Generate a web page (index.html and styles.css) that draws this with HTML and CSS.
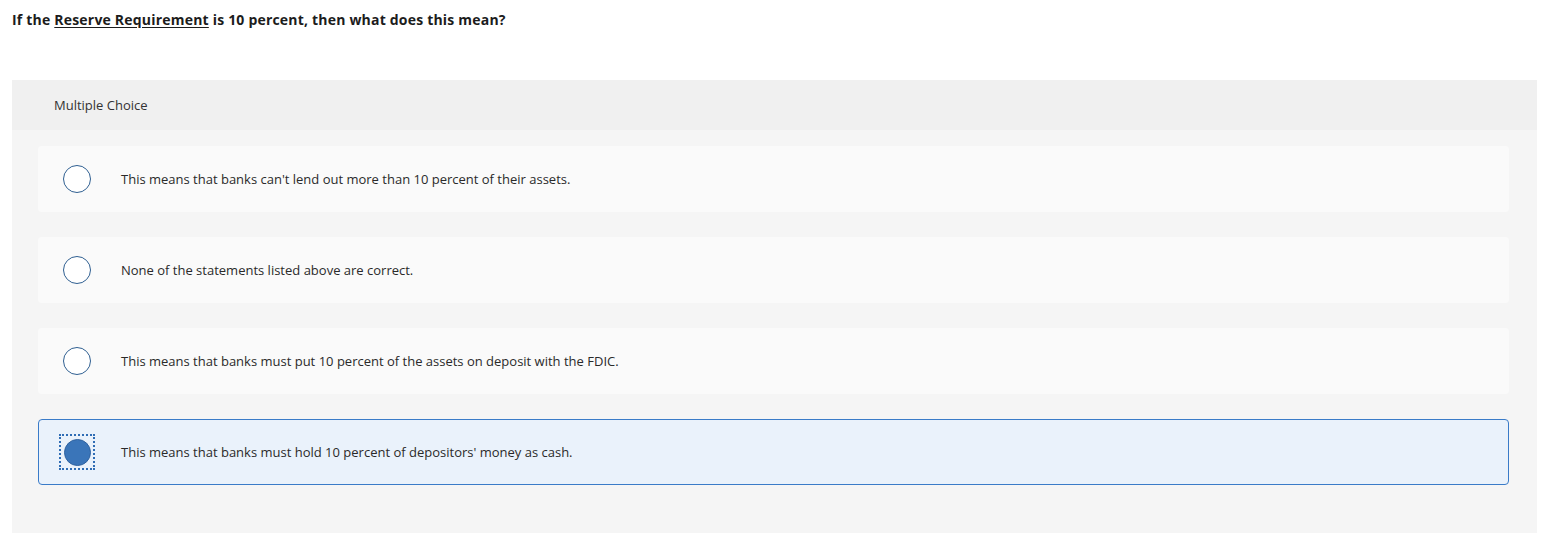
FILE: index.html
```html
<!DOCTYPE html>
<html>
<head>
<meta charset="utf-8">
<link rel="stylesheet" href="styles.css">
</head>
<body>
<div class="question">If the <a class="term" href="#">Reserve Requirement</a> is 10 percent, then what does this mean?</div>
<div class="panel">
  <div class="panel-head">Multiple Choice</div>
  <div class="options">
    <div class="option"><span class="radio"></span><span class="label">This means that banks can't lend out more than 10 percent of their assets.</span></div>
    <div class="option"><span class="radio"></span><span class="label">None of the statements listed above are correct.</span></div>
    <div class="option"><span class="radio"></span><span class="label">This means that banks must put 10 percent of the assets on deposit with the FDIC.</span></div>
    <div class="option selected"><span class="focus"><span class="radio"></span></span><span class="label">This means that banks must hold 10 percent of depositors' money as cash.</span></div>
  </div>
</div>
</body>
</html>
```
FILE: styles.css
```css
html, body { margin: 0; padding: 0; background: #fff; }
body {
  font-family: "Open Sans", "Liberation Sans", Arial, sans-serif;
  color: #222;
  height: 533px;
  overflow: hidden;
}
.question {
  padding: 10px 0 0 12px;
  height: 69px;
  box-sizing: border-box;
  font-size: 14px;
  font-weight: 700;
  letter-spacing: 0.2px;
  color: #1c1c1c;
}
.term { color: #1c1c1c; text-decoration: underline; text-underline-offset: 2px; }
.panel {
  margin: 11px 20px 0 12px;
  background: #f5f5f5;
  height: 453px;
}
.panel-head {
  height: 50px;
  background: #f0f0f0;
  display: flex;
  align-items: center;
  padding-left: 42px;
  font-size: 13px;
  color: #333;
}
.options {
  padding: 16px 28px 0 26px;
  display: flex;
  flex-direction: column;
  gap: 25px;
}
.option {
  height: 66px;
  box-sizing: border-box;
  background: #fafafa;
  border-radius: 4px;
  display: flex;
  align-items: center;
  padding-left: 24px;
  border: 1px solid transparent;
}
.radio {
  width: 28px;
  height: 28px;
  box-sizing: border-box;
  border: 1.5px solid #2f5f91;
  border-radius: 50%;
  background: #fff;
  flex: none;
}
.label {
  margin-left: 30px;
  font-size: 13px;
  color: #2a2a2a;
}
.option.selected {
  background: #eaf2fb;
  border-color: #3a7bc8;
  padding-left: 20px;
}
.focus {
  width: 36px;
  height: 36px;
  box-sizing: border-box;
  border: 2px dotted #2f6db5;
  display: flex;
  align-items: center;
  justify-content: center;
  flex: none;
}
.focus .radio {
  width: 27px;
  height: 27px;
  background: #3a75b9;
  border: 1px solid #2f62a0;
}
.selected .label { margin-left: 26px; }
```
